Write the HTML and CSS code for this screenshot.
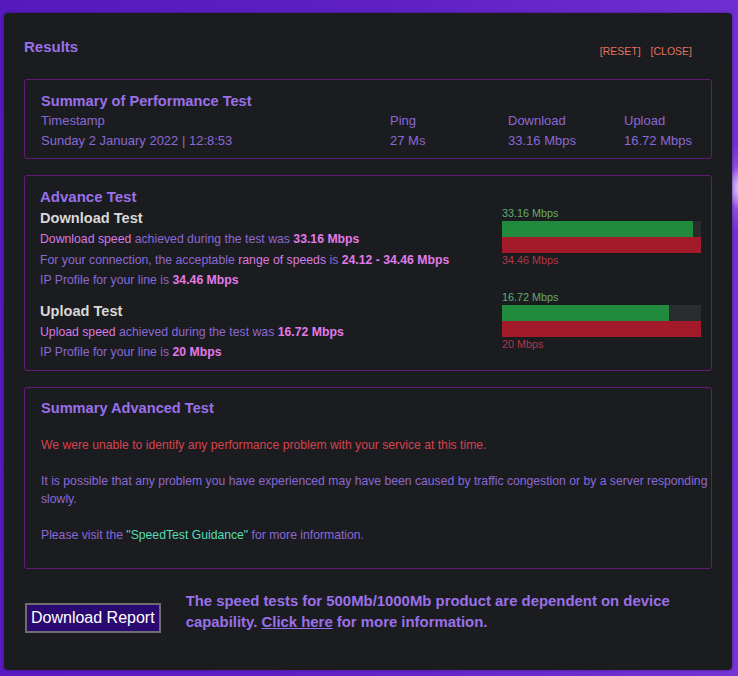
FILE: index.html
```html
<!DOCTYPE html>
<html lang="en">
<head>
<meta charset="utf-8">
<title>Results</title>
<link rel="stylesheet" href="styles.css">
</head>
<body>
<div class="panel">
  <div class="head">
    <h2 class="page-title">Results</h2>
    <div class="actions"><a class="act">[RESET]</a><a class="act">[CLOSE]</a></div>
  </div>

  <section class="box box-summary">
    <h3 class="box-title">Summary of Performance Test</h3>
    <div class="stats">
      <span>Timestamp</span><span>Ping</span><span>Download</span><span>Upload</span>
      <span>Sunday 2 January 2022 | 12:8:53</span><span>27 Ms</span><span>33.16 Mbps</span><span>16.72 Mbps</span>
    </div>
  </section>

  <section class="box box-advance">
    <div class="adv-text">
      <h3 class="box-title">Advance Test</h3>
      <h4 class="sub">Download Test</h4>
      <p class="line"><span class="hl">Download speed</span> achieved during the test was <b class="val">33.16 Mbps</b></p>
      <p class="line">For your connection, the acceptable <span class="hl">range of speeds</span> is <b class="val">24.12 - 34.46 Mbps</b></p>
      <p class="line">IP Profile for your line is <b class="val">34.46 Mbps</b></p>
      <h4 class="sub sub-up">Upload Test</h4>
      <p class="line"><span class="hl">Upload speed</span> achieved during the test was <b class="val">16.72 Mbps</b></p>
      <p class="line">IP Profile for your line is <b class="val">20 Mbps</b></p>
    </div>
    <div class="bars">
      <div class="bar-group">
        <div class="bar-label good">33.16 Mbps</div>
        <div class="bar-track"><div class="bar-fill" style="width:96%"></div></div>
        <div class="bar-max"></div>
        <div class="bar-label bad">34.46 Mbps</div>
      </div>
      <div class="bar-group second">
        <div class="bar-label good">16.72 Mbps</div>
        <div class="bar-track"><div class="bar-fill" style="width:84%"></div></div>
        <div class="bar-max"></div>
        <div class="bar-label bad">20 Mbps</div>
      </div>
    </div>
  </section>

  <section class="box box-advsum">
    <h3 class="box-title">Summary Advanced Test</h3>
    <p class="para warn">We were unable to identify any performance problem with your service at this time.</p>
    <p class="para">It is possible that any problem you have experienced may have been caused by traffic congestion or by a server responding slowly.</p>
    <p class="para">Please visit the <a class="guide">"SpeedTest Guidance"</a> for more information.</p>
  </section>

  <div class="foot">
    <button class="dl-btn" type="button">Download Report</button>
    <p class="foot-note">The speed tests for 500Mb/1000Mb product are dependent on device capability. <a class="foot-link">Click here</a> for more information.</p>
  </div>
</div>
</body>
</html>
```

FILE: styles.css
```css
* { box-sizing: border-box; }

html, body { margin: 0; padding: 0; }

body {
  width: 738px;
  height: 676px;
  overflow: hidden;
  padding: 13px 6px 6px 4px;
  font-family: "Liberation Sans", Arial, sans-serif;
  background:
    radial-gradient(circle at 748px 188px, rgba(255,255,255,1) 0px, rgba(235,210,255,0.85) 10px, rgba(190,130,250,0.35) 24px, rgba(150,80,230,0) 45px),
    linear-gradient(100deg, #5519bd 0%, #5e20c4 45%, #7434d6 100%);
}

.panel {
  width: 728px;
  height: 657px;
  background: #1b1c1f;
  border-radius: 4px;
  padding: 26px 20px 0 20px;
  box-shadow: 0 0 3px rgba(0,0,0,0.4);
}

.head {
  display: flex;
  justify-content: space-between;
  align-items: flex-start;
  height: 40px;
}

.page-title {
  margin: 0;
  font-size: 15px;
  line-height: 16px;
  font-weight: bold;
  color: #9a70e8;
}

.actions {
  display: flex;
  gap: 10px;
  margin-top: 6px;
  padding-right: 20px;
}

.act {
  font-size: 10.5px;
  line-height: 12px;
  color: #e0735f;
}

.box {
  border: 1px solid #631a78;
  border-radius: 3px;
  margin-top: 16px;
}

.head + .box { margin-top: 0; }

.box-title {
  margin: 0;
  font-size: 14.6px;
  line-height: 20px;
  font-weight: bold;
  color: #9a70e8;
}

.box-summary {
  padding: 11px 16px 7px 16px;
}

.stats {
  display: grid;
  grid-template-columns: 349px 118px 116px 1fr;
  font-size: 13px;
  line-height: 20px;
  color: #8b68d6;
  white-space: nowrap;
}

.box-advance {
  display: flex;
  justify-content: space-between;
  padding: 11px 10px 7px 15px;
}

.adv-text .box-title { font-size: 15px; }

.sub {
  margin: 0;
  font-size: 14.6px;
  line-height: 22px;
  font-weight: bold;
  color: #d8d8d8;
}

.sub-up { margin-top: 9px; }

.line {
  margin: 0;
  font-size: 12.25px;
  line-height: 20.5px;
  color: #8b68d6;
}

.hl { color: #d779e0; }

.val { color: #e27ae8; font-weight: bold; }

.bars {
  width: 199px;
  padding-top: 19px;
}

.bar-group.second { margin-top: 23px; }

.bar-label {
  font-size: 10.8px;
  line-height: 14px;
}

.bar-label.good { color: #62ad6c; margin-bottom: 1px; }
.bar-label.bad { color: #b03848; }

.bar-track {
  height: 16px;
  background: #2b2c2f;
}

.bar-fill {
  height: 100%;
  background: #218a3c;
}

.bar-max {
  height: 16px;
  background: #a31b2a;
}

.box-advsum {
  padding: 10px 0 24px 16px;
}

.para {
  margin: 18px 0 0 0;
  font-size: 12.2px;
  line-height: 18px;
  color: #8b68d6;
}

.para.warn { color: #d6434f; }

.guide { color: #56dcb6; }

.foot {
  display: flex;
  align-items: flex-start;
  margin-top: 22px;
}

.dl-btn {
  margin: 12px 0 0 1px;
  padding: 4px 4px;
  height: 30px;
  background: #2a0a70;
  border: 2px solid #6e6e70;
  color: #ffffff;
  font-family: "Liberation Sans", Arial, sans-serif;
  font-size: 16px;
  line-height: 18px;
  white-space: nowrap;
}

.foot-note {
  margin: 0 0 0 25px;
  font-size: 14.9px;
  line-height: 21px;
  font-weight: bold;
  color: #9a70e8;
}

.foot-link {
  color: #9a70e8;
  text-decoration: underline;
}
```
